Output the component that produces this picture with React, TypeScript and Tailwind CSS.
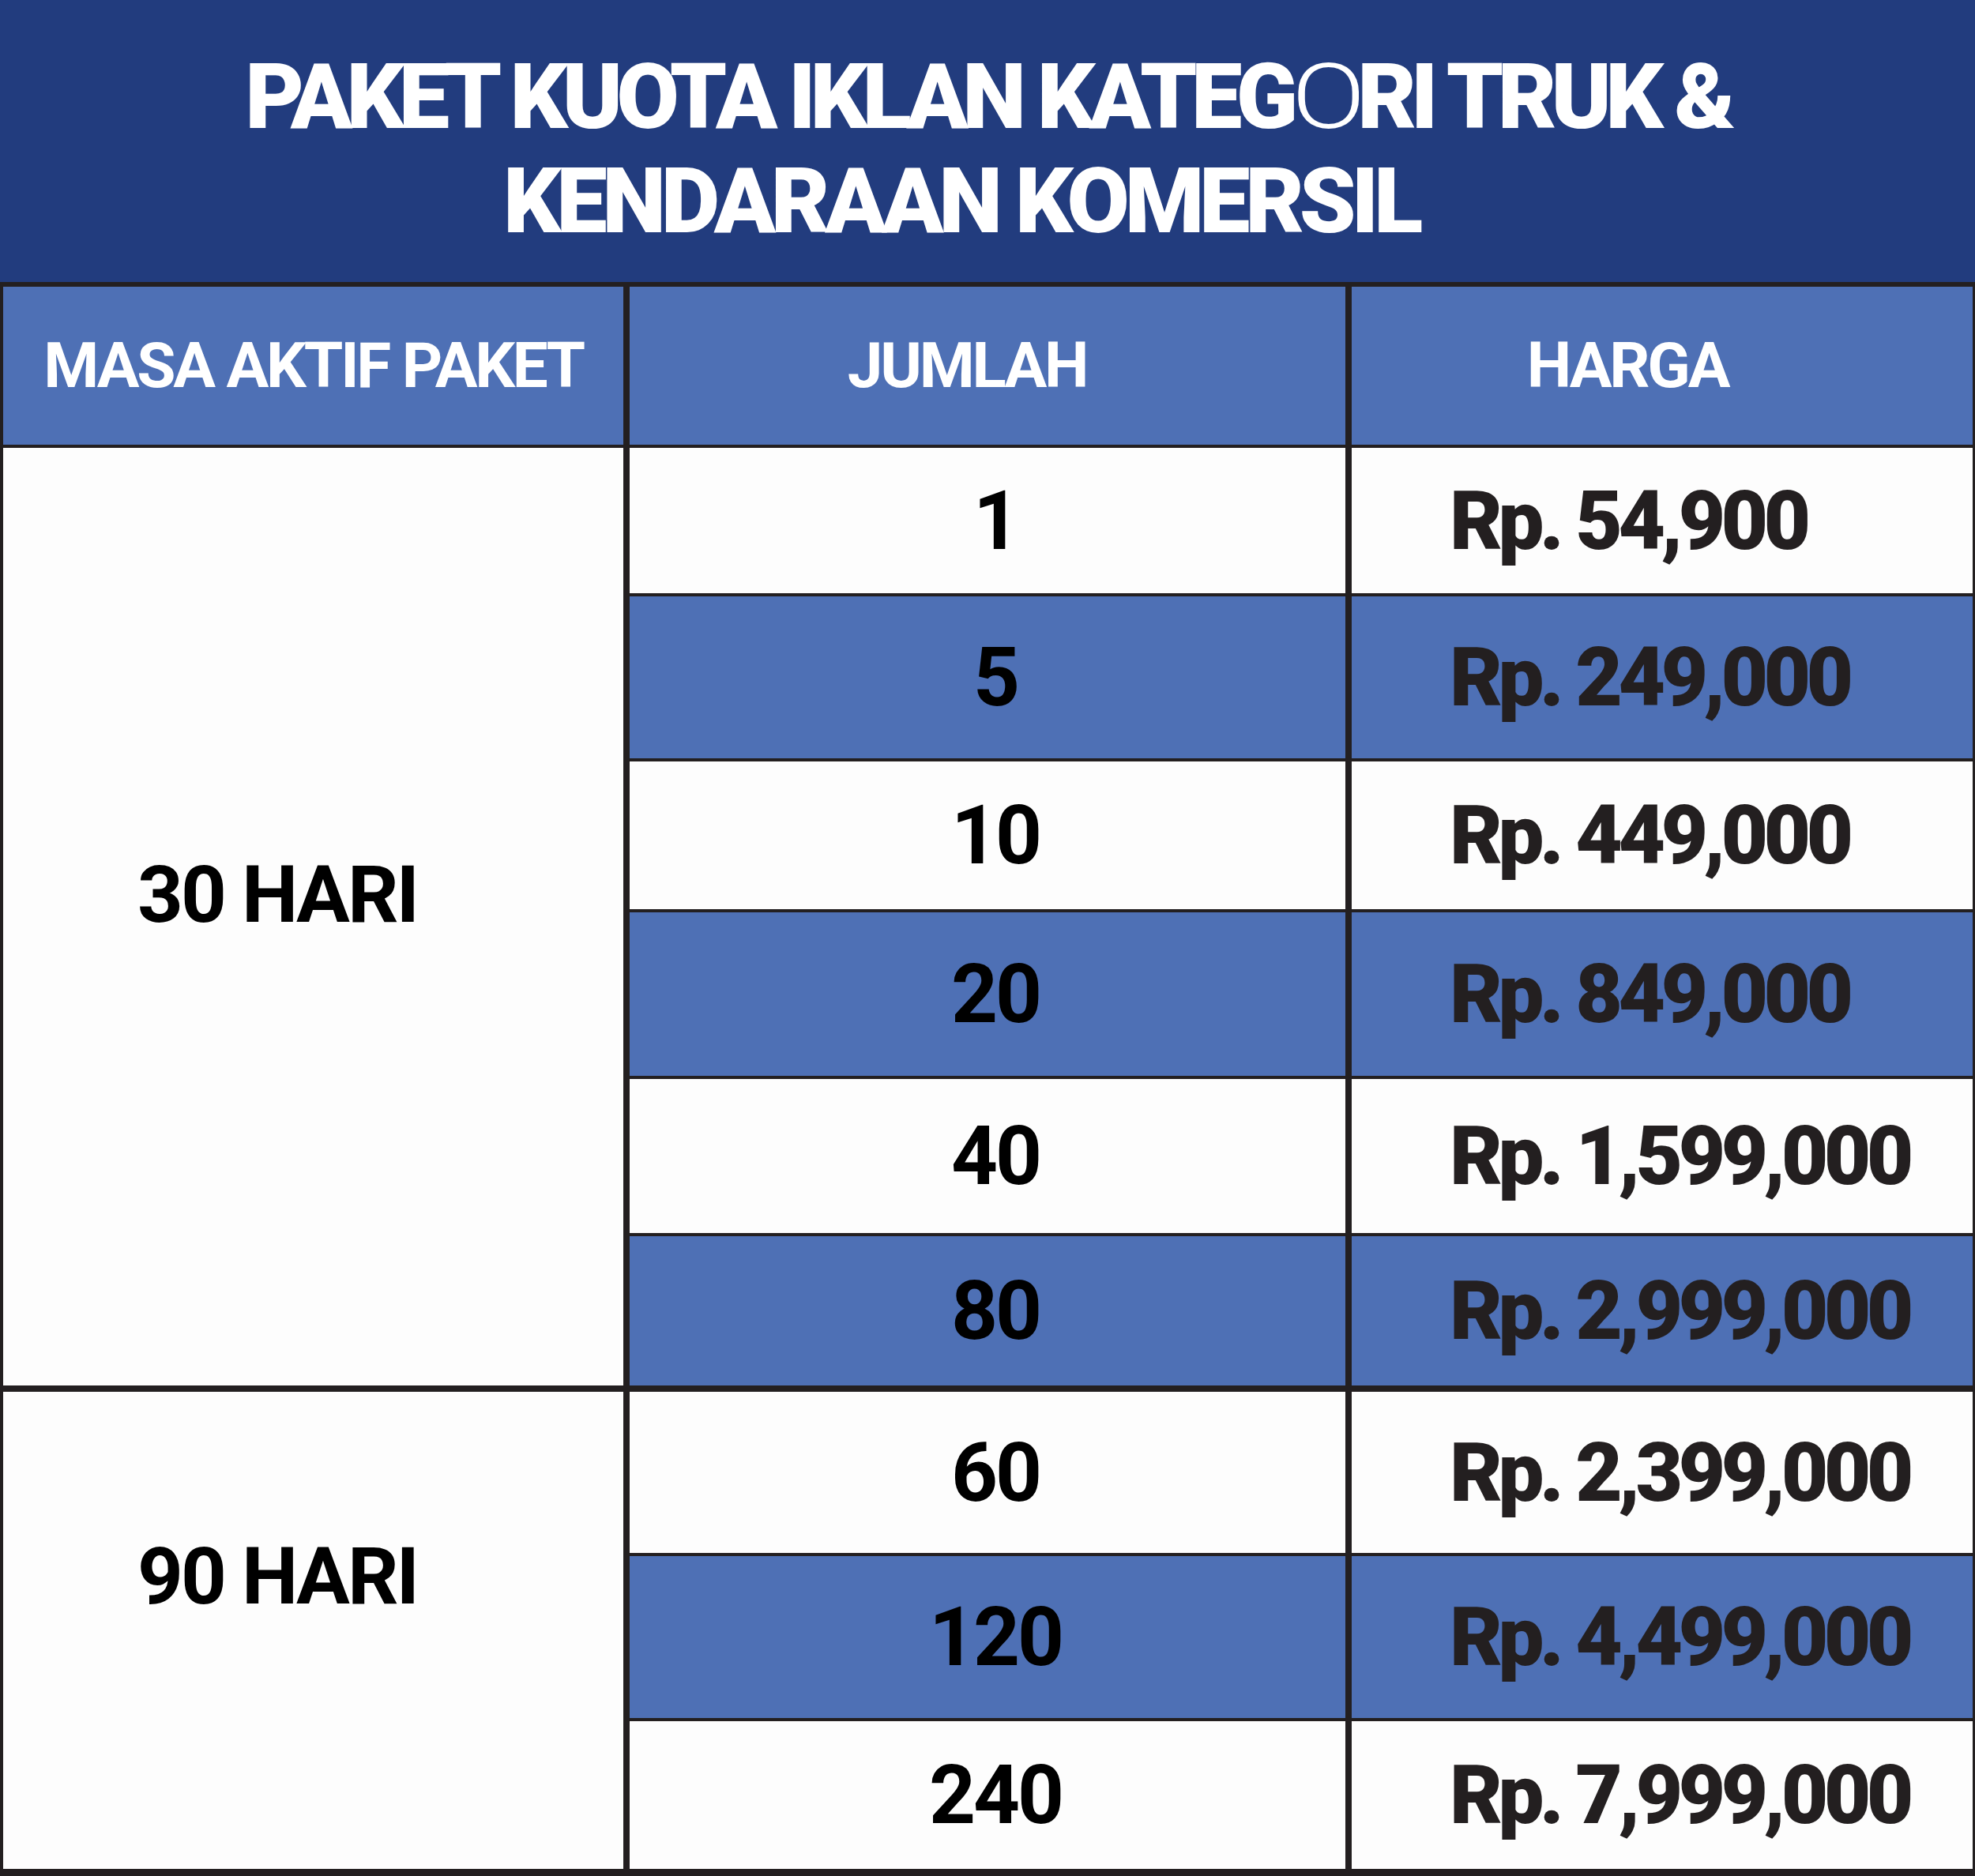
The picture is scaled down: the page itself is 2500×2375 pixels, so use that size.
const font = "font-['Roboto','Liberation_Sans',sans-serif]";

type Row = { qty: string; price: string; blue: boolean };

const first: Row[] = [
  { qty: "1", price: "Rp. 54,900", blue: false },
  { qty: "5", price: "Rp. 249,000", blue: true },
  { qty: "10", price: "Rp. 449,000", blue: false },
  { qty: "20", price: "Rp. 849,000", blue: true },
  { qty: "40", price: "Rp. 1,599,000", blue: false },
  { qty: "80", price: "Rp. 2,999,000", blue: true },
];

const second: Row[] = [
  { qty: "60", price: "Rp. 2,399,000", blue: false },
  { qty: "120", price: "Rp. 4,499,000", blue: true },
  { qty: "240", price: "Rp. 7,999,000", blue: false },
];

function QtyPriceRow({ row, gap }: { row: Row; gap?: boolean }) {
  const bg = row.blue ? "bg-[#4e70b5]" : "bg-[#fdfdfd]";
  return (
    <>
      <div className={`${bg} ${gap ? "mt-[4px]" : ""} flex items-center justify-center pl-[20px]`}>
        <span className="text-[103px] leading-none font-bold tracking-[-0.03em] text-black">{row.qty}</span>
      </div>
      <div className={`${bg} ${gap ? "mt-[4px]" : ""} flex items-center pl-[124px]`}>
        <span className="text-[103px] leading-none font-black tracking-[-0.055em] text-[#231f20]">{row.price}</span>
      </div>
    </>
  );
}

function HeadCell({ children, className = "" }: { children: React.ReactNode; className?: string }) {
  return (
    <div className={`bg-[#4e70b5] flex items-center justify-center ${className}`}>
      <span className="text-[80px] leading-none font-bold tracking-[-0.04em] text-white">{children}</span>
    </div>
  );
}

export default function App() {
  return (
    <div className={`w-[2500px] h-[2375px] bg-[#231f20] flex flex-col ${font}`}>
      {/* judul */}
      <div className="h-[357px] bg-[#223c7e] pt-[57px] text-center text-white text-[115px] leading-[132px] font-black">
        <div className="tracking-[-0.065em]">
          PAKET KUOTA IKLAN KATEG
          <span className="inline-block font-light scale-x-[1.2] mx-[6px]">O</span>
          RI TRUK &amp;
        </div>
        <div className="tracking-[-0.055em] pr-[68px]">
          KENDARAAN K<span className="font-black">O</span>MERSIL
        </div>
      </div>

      {/* tabel */}
      <div className="flex-1 pt-[6px] pl-[4px] pr-[3px] pb-[9px]">
        <div className="grid grid-cols-[785px_906px_786px] grid-rows-[200px_184px_205px_187px_207px_195px_189px_208px_205px_187px] gap-x-[8px] gap-y-[4px]">
          <HeadCell>MASA AKTIF PAKET</HeadCell>
          <HeadCell className="pr-[52px]">JUMLAH</HeadCell>
          <HeadCell className="pr-[88px]">HARGA</HeadCell>

          <div className="row-span-6 bg-[#fdfdfd] flex items-center pl-[170px] pb-[56px]">
            <span className="text-[101px] leading-none font-bold tracking-[-0.03em] text-black">30 HARI</span>
          </div>
          {first.map((r) => (
            <QtyPriceRow key={r.qty} row={r} />
          ))}

          <div className="row-span-3 mt-[4px] bg-[#fdfdfd] flex items-center pl-[170px] pb-[138px]">
            <span className="text-[101px] leading-none font-bold tracking-[-0.03em] text-black">90 HARI</span>
          </div>
          {second.map((r, i) => (
            <QtyPriceRow key={r.qty} row={r} gap={i === 0} />
          ))}
        </div>
      </div>
    </div>
  );
}
